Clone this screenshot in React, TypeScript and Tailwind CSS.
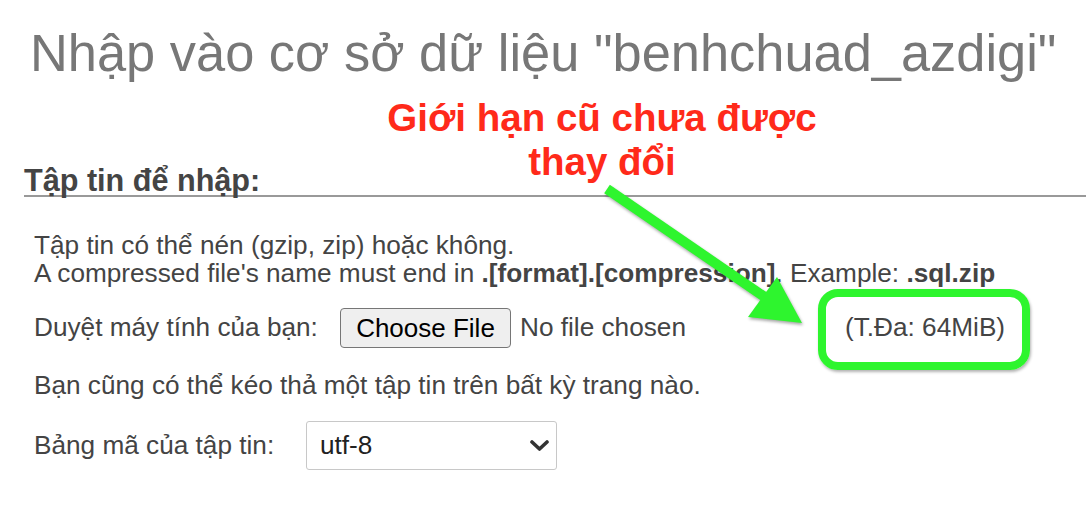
// Annotation overlay: arrow pointing at the size limit
const Arrow = () => (
    <svg
        className="pointer-events-none absolute left-0 top-0 h-[507px] w-[1086px]"
        viewBox="0 0 1086 507"
        style={{ filter: 'drop-shadow(1px 2px 1.5px rgba(0,0,0,0.35))' }}
    >
        <line x1="607" y1="189" x2="772" y2="302" stroke="#2ef52e" strokeWidth="10" />
        <polygon points="777,277 748,317 802,323" fill="#2ef52e" />
    </svg>
);

const Chevron = () => (
    <svg width="19" height="12" viewBox="0 0 19 12" className="shrink-0">
        <polyline
            points="2,2 9.5,9 17,2"
            fill="none"
            stroke="#333"
            strokeWidth="3.6"
            strokeLinecap="round"
            strokeLinejoin="round"
        />
    </svg>
);

export default function App() {
    return (
        <div className="relative h-[507px] w-[1086px] overflow-hidden bg-white font-['Liberation_Sans',Arial,sans-serif] text-[#444]">
            <h1 className="pl-[30px] pt-[23px] text-[52.4px] leading-[60px] text-[#777] whitespace-nowrap">
                Nhập vào cơ sở dữ liệu "benhchuad_azdigi"
            </h1>

            <div className="ml-[24px] mt-[82px] border-b-2 border-[#999]">
                <h2 className="text-[30.6px] font-bold leading-[30px] text-[#444]">Tập tin để nhập:</h2>
            </div>

            <div className="pl-[34px] pt-[34px] text-[26.2px]">
                <p className="leading-[28px]">Tập tin có thể nén (gzip, zip) hoặc không.</p>
                <p className="leading-[28px] whitespace-nowrap">
                    A compressed file's name must end in <b>.[format].[compression]</b>. Example:{' '}
                    <b>.sql.zip</b>
                </p>

                <div className="mt-[21px] flex h-[40px] items-center whitespace-nowrap">
                    <span className="w-[306px]">Duyệt máy tính của bạn:</span>
                    <button className="h-[40px] w-[171px] rounded-[4px] border border-[#767676] bg-[#efefef] text-[26px] text-black">
                        Choose File
                    </button>
                    <span className="ml-[9px] w-[325px]">No file chosen</span>
                    <span>(T.Đa: 64MiB)</span>
                </div>

                <p className="mt-[23px] leading-[28px]">Bạn cũng có thể kéo thả một tập tin trên bất kỳ trang nào.</p>

                <div className="mt-[22px] flex h-[49px] items-center whitespace-nowrap">
                    <span className="w-[272px]">Bảng mã của tập tin:</span>
                    <div className="flex h-[49px] w-[251px] items-center justify-between rounded-[3px] border border-[#c8c8c8] pl-[13px] pr-[7px] text-[#222]">
                        <span>utf-8</span>
                        <Chevron />
                    </div>
                </div>
            </div>

            {/* annotation */}
            <div className="absolute left-[352px] top-[96px] w-[500px] text-center text-[38.5px] font-bold leading-[44px] text-[#ff2a1a]">
                Giới hạn cũ chưa được
                <br />
                thay đổi
            </div>
            <div className="absolute left-[818px] top-[289px] h-[81px] w-[212px] rounded-[20px] border-[8px] border-[#2ef52e] shadow-[1px_2px_3px_rgba(0,0,0,0.3)]" />
            <Arrow />
        </div>
    );
}
